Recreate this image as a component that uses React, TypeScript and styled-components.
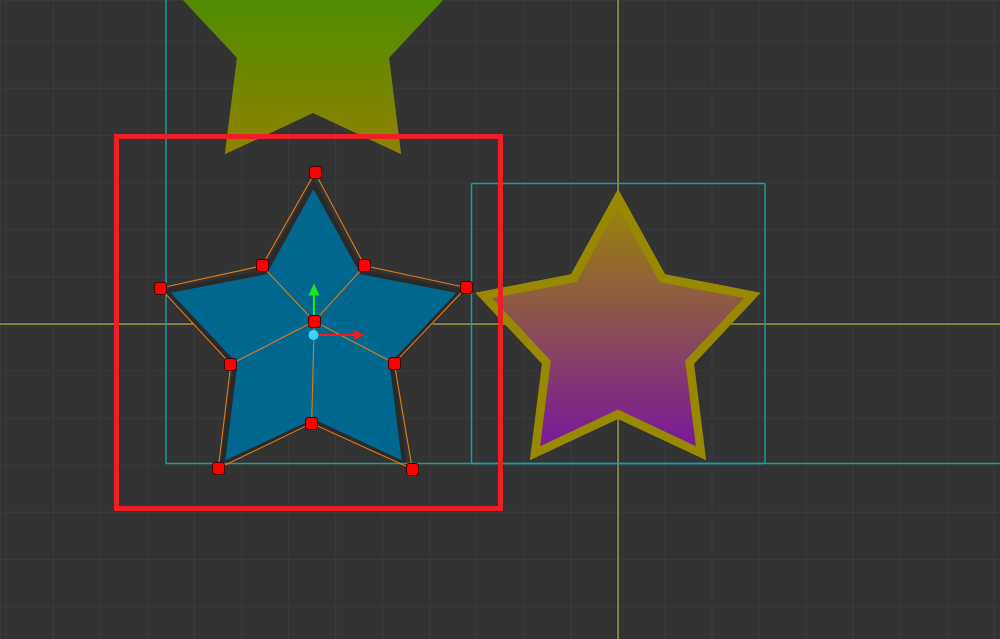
import React from "react";
import styled, { createGlobalStyle } from "styled-components";

const GlobalStyle = createGlobalStyle`
  html, body { margin: 0; padding: 0; background: #333333; overflow: hidden; }
  #root { width: 1000px; height: 639px; }
`;

const Viewport = styled.div`
  position: relative;
  width: 1000px;
  height: 639px;
  overflow: hidden;
  background-color: #333333;
  background-image:
    linear-gradient(to right, #3b3b3b 1px, transparent 1px),
    linear-gradient(to bottom, #3b3b3b 1px, transparent 1px);
  background-size: 47.06px 47.12px;
  background-position: 5.8px 40.8px;
  box-shadow: inset 1px 1px 0 #3a3a3a;
`;

const Drawing = styled.svg`
  position: absolute;
  inset: 0;
  width: 1000px;
  height: 639px;
  display: block;
`;

const Handle = styled.div<{ $x: number; $y: number }>`
  position: absolute;
  left: ${(p) => p.$x - 6.5}px;
  top: ${(p) => p.$y - 6.5}px;
  width: 13px;
  height: 13px;
  box-sizing: border-box;
  background: #ff0000;
  border: 1.5px solid #3a0505;
  border-radius: 3px;
`;

const star = (cx: number, cy: number, R: number, r: number) =>
  Array.from({ length: 10 }, (_, i) => {
    const a = ((-90 + 36 * i) * Math.PI) / 180;
    const rad = i % 2 === 0 ? R : r;
    return `${(cx + rad * Math.cos(a)).toFixed(2)},${(cy + rad * Math.sin(a)).toFixed(2)}`;
  }).join(" ");

type P = [number, number];
const ctrl: P[] = [
  [315, 172.5],
  [364.7, 265.8],
  [466.3, 287.5],
  [394.2, 363.2],
  [412.3, 469],
  [311.7, 423.3],
  [218.3, 468.3],
  [230.8, 364.2],
  [160.2, 288],
  [262, 265.8],
];
const center: P = [314.2, 321.3];
const inner: P[] = [ctrl[1], ctrl[3], ctrl[5], ctrl[7], ctrl[9]];

export default function App() {
  const upper = star(313, 33, 150, 80);
  const blue = star(313.5, 339, 150, 80);
  const purple = star(618, 339, 150, 80);
  return (
    <>
      <GlobalStyle />
      <Viewport>
        <Drawing viewBox="0 0 1000 639">
          <defs>
            <linearGradient id="gUpper" gradientUnits="userSpaceOnUse" x1="0" y1="0" x2="0" y2="154">
              <stop offset="0" stopColor="#4f8c00" />
              <stop offset="1" stopColor="#908200" />
            </linearGradient>
            <linearGradient id="gPurple" gradientUnits="userSpaceOnUse" x1="0" y1="189" x2="0" y2="459">
              <stop offset="0" stopColor="#9c8c00" />
              <stop offset="1" stopColor="#7912a3" />
            </linearGradient>
            <clipPath id="cPurple">
              <polygon points={purple} />
            </clipPath>
          </defs>

          {/* axes */}
          <rect x="0" y="322" width="1000" height="1" fill="#262a36" />
          <rect x="0" y="323" width="1000" height="2" fill="#83803e" />
          <rect x="616" y="0" width="1" height="639" fill="#262a36" />
          <rect x="617" y="0" width="2" height="639" fill="#83803e" />

          {/* upper star */}
          <polygon points={upper} fill="url(#gUpper)" />

          {/* blue star */}
          <polygon
            points={blue}
            fill="#00678f"
            stroke="#2a2a2a"
            strokeWidth={9}
            strokeLinejoin="miter"
            strokeMiterlimit={10}
            paintOrder="stroke"
          />

          {/* purple star */}
          <g clipPath="url(#cPurple)">
            <polygon points={purple} fill="url(#gPurple)" stroke="#998900" strokeWidth={17} strokeLinejoin="miter" strokeMiterlimit={10} />
          </g>

          {/* bounding boxes */}
          <g fill="none" stroke="#23979a" strokeWidth={1.5}>
            <path d="M166 -10 V463.5 H1010" />
            <rect x="471.5" y="183.5" width="293.5" height="280" rx="1" />
          </g>

          {/* control lines */}
          <g stroke="#e07d14" strokeWidth={1.1} fill="none">
            <polygon points={ctrl.map((p) => p.join(",")).join(" ")} />
            {inner.map((p, i) => (
              <line key={i} x1={center[0]} y1={center[1]} x2={p[0]} y2={p[1]} />
            ))}
          </g>

          {/* gizmo */}
          <line x1="314" y1="316" x2="314" y2="294" stroke="#1ee61e" strokeWidth={2.2} />
          <polygon points="314,283.5 308.5,295.5 319.5,295.5" fill="#1ee61e" />
          <line x1="318" y1="335" x2="356" y2="335" stroke="#ee1c1c" strokeWidth={1.8} />
          <polygon points="365,335 354,330 354,340" fill="#ee1c1c" />
          <circle cx="313.5" cy="335" r="5" fill="#35d7f8" />

          {/* selection */}
          <rect x="116.5" y="136.5" width="384" height="372" fill="none" stroke="#ec1f27" strokeWidth={5} />
        </Drawing>
        {ctrl.map(([x, y], i) => (
          <Handle key={i} $x={x} $y={y} />
        ))}
        <Handle $x={center[0]} $y={center[1]} />
      </Viewport>
    </>
  );
}
